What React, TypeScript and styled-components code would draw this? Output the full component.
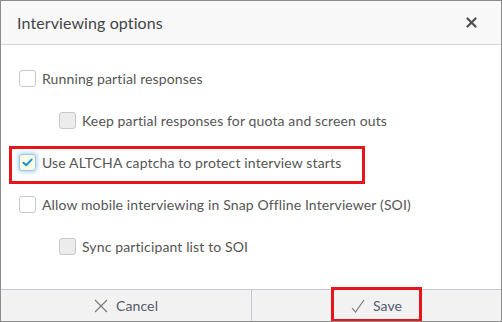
import React from "react";
import styled, { createGlobalStyle, css } from "styled-components";

const Global = createGlobalStyle`
  html, body { margin: 0; padding: 0; background: #ffffff; }
  body { font-family: "Lato", "Open Sans", sans-serif; }
  * { box-sizing: border-box; }
`;

const Dialog = styled.div`
  width: 502px;
  height: 322px;
  border: 1px solid #8c8c8c;
  display: flex;
  flex-direction: column;
  background: #ffffff;
  overflow: hidden;
`;

const Header = styled.div`
  height: 44px;
  flex: none;
  display: flex;
  align-items: center;
  justify-content: space-between;
  padding: 0 24px 0 16px;
  background: #f8f8f8;
  border-bottom: 1px solid #d6d6d6;
`;

const Title = styled.h1`
  margin: 0;
  font-size: 16px;
  font-weight: 400;
  color: #444444;
  letter-spacing: 0.1px;
`;

const Close = styled.button`
  border: none;
  background: none;
  padding: 0;
  display: flex;
  width: 11px;
  height: 11px;
  cursor: pointer;
`;

const Body = styled.div`
  flex: 1;
  display: flex;
  flex-direction: column;
  align-items: flex-start;
  padding: 12px 0 0 18px;
`;

const Row = styled.label<{ $indent?: boolean; $highlight?: boolean }>`
  position: relative;
  display: flex;
  align-items: center;
  gap: 6px;
  height: 42px;
  margin-left: ${(p) => (p.$indent ? "40px" : "0")};
  font-size: 14px;
  letter-spacing: 0.13px;
  color: #555555;
  cursor: pointer;
  ${(p) =>
    p.$highlight &&
    css`
      &::after {
        content: "";
        position: absolute;
        left: -10px;
        right: -24px;
        top: 5px;
        bottom: -1px;
        border: 3px solid #e8141c;
        pointer-events: none;
      }
    `}
`;

const Box = styled.span<{ $checked?: boolean; $disabled?: boolean }>`
  width: 17px;
  height: 17px;
  flex: none;
  border-radius: 3px;
  border: 1px solid ${(p) => (p.$checked ? "#9fc6e4" : "#c8c8c8")};
  background: ${(p) =>
    p.$checked ? "#fbfbe2" : p.$disabled ? "#ececec" : "#ffffff"};
  display: flex;
  align-items: center;
  justify-content: center;
  ${(p) =>
    p.$checked &&
    css`
      box-shadow: 0 0 4px 1px rgba(80, 170, 235, 0.55);
    `}
`;

const Footer = styled.div`
  height: 32px;
  flex: none;
  display: grid;
  grid-template-columns: 251px 1fr;
  background: #f2f2f2;
  border-top: 1px solid #c4c8d2;
`;

const FooterButton = styled.button<{ $divider?: boolean }>`
  border: none;
  background: transparent;
  display: flex;
  align-items: center;
  justify-content: center;
  font-family: inherit;
  font-size: 14px;
  letter-spacing: 0.13px;
  color: #535a6e;
  cursor: pointer;
  padding: 0;
  border-right: ${(p) => (p.$divider ? "1px solid #c4c8d2" : "none")};
`;

const ButtonInner = styled.span<{ $highlight?: boolean }>`
  position: relative;
  display: flex;
  align-items: center;
  gap: 8px;
  ${(p) =>
    p.$highlight &&
    css`
      &::after {
        content: "";
        position: absolute;
        left: -20px;
        right: -20px;
        top: -10px;
        bottom: -8px;
        border: 3px solid #e8141c;
        pointer-events: none;
      }
    `}
`;

const CheckMark = () => (
  <svg width="11" height="9" viewBox="0 0 11 9">
    <path d="M1.5 4.8 L4.2 7.3 L9.6 1.6" fill="none" stroke="#1c8fd8" strokeWidth="2" strokeLinecap="round" strokeLinejoin="round" />
  </svg>
);

const options = [
  { label: "Running partial responses" },
  { label: "Keep partial responses for quota and screen outs", indent: true, disabled: true },
  { label: "Use ALTCHA captcha to protect interview starts", checked: true, highlight: true },
  { label: "Allow mobile interviewing in Snap Offline Interviewer (SOI)" },
  { label: "Sync participant list to SOI", indent: true, disabled: true },
];

export default function App() {
  return (
    <>
      <Global />
      <Dialog>
        <Header>
          <Title>Interviewing options</Title>
          <Close aria-label="Close">
            <svg width="11" height="11" viewBox="0 0 11 11">
              <path d="M1.5 1.5 L9.5 9.5 M9.5 1.5 L1.5 9.5" stroke="#505050" strokeWidth="2.2" strokeLinecap="round" />
            </svg>
          </Close>
        </Header>
        <Body>
          {options.map((o) => (
            <Row key={o.label} $indent={o.indent} $highlight={o.highlight}>
              <Box $checked={o.checked} $disabled={o.disabled}>
                {o.checked && <CheckMark />}
              </Box>
              {o.label}
            </Row>
          ))}
        </Body>
        <Footer>
          <FooterButton $divider>
            <ButtonInner>
              <svg width="14" height="14" viewBox="0 0 14 14">
                <path d="M1 1 L13 13 M13 1 L1 13" stroke="#777" strokeWidth="1.1" />
              </svg>
              Cancel
            </ButtonInner>
          </FooterButton>
          <FooterButton>
            <ButtonInner $highlight>
              <svg width="14" height="14" viewBox="0 0 14 14">
                <path d="M1 9 L4.5 13 L13 1" fill="none" stroke="#777" strokeWidth="1.1" />
              </svg>
              Save
            </ButtonInner>
          </FooterButton>
        </Footer>
      </Dialog>
    </>
  );
}
